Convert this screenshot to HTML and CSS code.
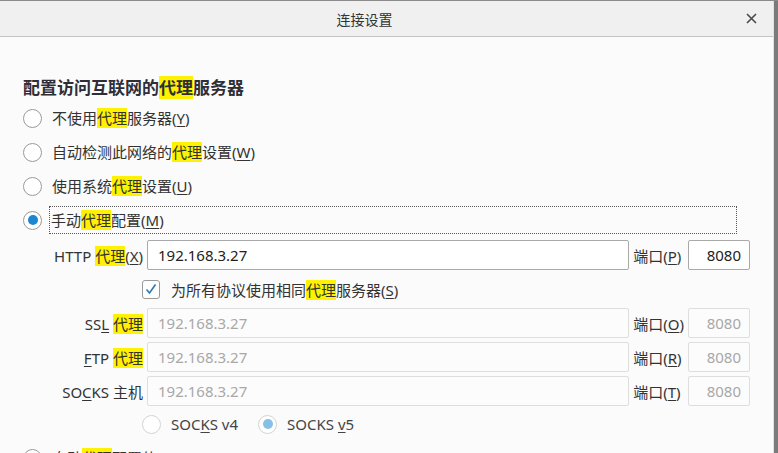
FILE: index.html
```html
<!DOCTYPE html>
<html>
<head>
    <title>连接设置</title>
    <link rel="stylesheet" href="styles.css">
</head>
<body>
    <div class="window">
        <div class="dialog">
            <div class="titlebar">
                <span class="title">连接设置</span>
                <span class="close">
                    <svg width="11" height="11" viewBox="0 0 11 11"><path d="M1 1L10 10M10 1L1 10" stroke="#4a4a4a" stroke-width="1.6" fill="none"/></svg>
                </span>
            </div>

            <div class="content">
                <h2 class="heading">配置访问互联网的<mark>代理</mark>服务器</h2>

                <label class="radio"><span class="dot"></span><span class="text">不使用<mark>代理</mark>服务器(<u>Y</u>)</span></label>
                <label class="radio"><span class="dot"></span><span class="text">自动检测此网络的<mark>代理</mark>设置(<u>W</u>)</span></label>
                <label class="radio"><span class="dot"></span><span class="text">使用系统<mark>代理</mark>设置(<u>U</u>)</span></label>
                <label class="radio checked"><span class="dot"></span><span class="text focus">手动<mark>代理</mark>配置(<u>M</u>)</span></label>

                <div class="proxy-grid">
                    <span class="plabel">HTTP <mark>代理</mark>(<u>X</u>)</span>
                    <div class="field">192.168.3.27</div>
                    <span class="portlabel">端口(<u>P</u>)</span>
                    <div class="field port">8080</div>

                    <label class="check-row">
                        <span class="box">
                            <svg width="14" height="14" viewBox="0 0 14 14"><path d="M2.5 7.5L5.5 11L11.5 2.5" stroke="#2a78b6" stroke-width="1.6" fill="none"/></svg>
                        </span>
                        <span>为所有协议使用相同<mark>代理</mark>服务器(<u>S</u>)</span>
                    </label>

                    <span class="plabel">SS<u>L</u> <mark>代理</mark></span>
                    <div class="field off">192.168.3.27</div>
                    <span class="portlabel">端口(<u>O</u>)</span>
                    <div class="field port off">8080</div>

                    <span class="plabel"><u>F</u>TP <mark>代理</mark></span>
                    <div class="field off">192.168.3.27</div>
                    <span class="portlabel">端口(<u>R</u>)</span>
                    <div class="field port off">8080</div>

                    <span class="plabel">SO<u>C</u>KS 主机</span>
                    <div class="field off">192.168.3.27</div>
                    <span class="portlabel">端口(<u>T</u>)</span>
                    <div class="field port off">8080</div>

                    <div class="socks-row">
                        <label class="radio small off"><span class="dot"></span><span class="text">SOC<u>K</u>S v4</span></label>
                        <label class="radio small off checked"><span class="dot"></span><span class="text">SOCKS <u>v</u>5</span></label>
                    </div>
                </div>

                <label class="radio last"><span class="dot"></span><span class="text">自动<mark>代理</mark>配置的 URL(<u>A</u>)</span></label>
            </div>
        </div>
        <div class="edge"></div>
    </div>
</body>
</html>
```

FILE: styles.css
```css
html, body {
    margin: 0;
    padding: 0;
    height: 100%;
    overflow: hidden;
}
body {
    font-family: "Noto Sans", "Noto Sans CJK SC", sans-serif;
    font-size: 15px;
    color: #333;
    background: #fbfbfb;
}
mark {
    background: #fff200;
    color: inherit;
}
u {
    text-decoration-thickness: 1px;
    text-underline-offset: 2px;
}
.window {
    display: flex;
    height: 453px;
    border-top: 1px solid #8a8a8a;
    box-sizing: border-box;
}
.dialog {
    flex: 1;
    display: flex;
    flex-direction: column;
    border-right: 1px solid #e2e2e2;
    overflow: hidden;
}
.edge {
    width: 4px;
    background: #7b7b7b;
}
.titlebar {
    flex: none;
    height: 35px;
    background: #f0f0f0;
    border-bottom: 1px solid #c4c4c4;
    display: flex;
    align-items: center;
    position: relative;
}
.title {
    flex: 1;
    text-align: center;
    padding-right: 44px;
    font-size: 14px;
    color: #333;
}
.close {
    position: absolute;
    right: 16px;
    top: 12px;
    line-height: 0;
}
.content {
    flex: none;
    padding: 39px 23px 0 23px;
    background: #fbfbfb;
}
.heading {
    margin: 0 0 1px 0;
    font-size: 17px;
    font-weight: bold;
    line-height: 24px;
    color: #2e2e38;
}
.radio {
    display: flex;
    align-items: center;
    height: 34px;
    color: #333;
}
.radio .dot {
    width: 19px;
    height: 19px;
    border: 1px solid #9a9a9a;
    border-radius: 50%;
    background: #fff;
    box-sizing: border-box;
    margin-right: 9px;
    display: flex;
    align-items: center;
    justify-content: center;
    flex: none;
}
.radio.checked .dot::after {
    content: "";
    width: 10px;
    height: 10px;
    border-radius: 50%;
    background: #1b86d2;
}
.radio .text {
    padding: 5px 2px 5px 1px;
    line-height: 18px;
    white-space: nowrap;
}
.radio .focus {
    flex: 1;
    margin-right: 13px;
    outline: 1px dotted #555;
    outline-offset: -1px;
    margin-left: -2px;
    padding-left: 2px;
}
.radio.off .dot {
    border-color: #d4d4d4;
}
.radio.off.checked .dot::after {
    background: #86c0e6;
}
.radio.last {
    margin-top: 3px;
}
.proxy-grid {
    display: grid;
    grid-template-columns: 93px 1fr auto 62px;
    column-gap: 4px;
    row-gap: 4px;
    margin: 3px 0 0 27px;
    align-items: center;
}
.plabel {
    text-align: right;
    white-space: nowrap;
    color: #333;
}
.portlabel {
    white-space: nowrap;
    color: #333;
}
.field {
    height: 30px;
    border: 1px solid #a9a9a9;
    border-radius: 2px;
    background: #fff;
    box-sizing: border-box;
    padding: 0 10px;
    line-height: 28px;
    font-size: 15px;
    color: #222;
}
.field.port {
    text-align: right;
    padding: 0 8px 0 0;
}
.field.off {
    border-color: #dedede;
    background: #fcfcfc;
    color: #a8a8a8;
}
.check-row {
    grid-column: 2 / 5;
    display: flex;
    align-items: center;
    height: 30px;
    margin: 0 0 0 -5px;
}
.check-row .box {
    width: 18px;
    height: 19px;
    border: 1px solid #9a9a9a;
    border-radius: 3px;
    background: #fff;
    box-sizing: border-box;
    display: flex;
    align-items: center;
    justify-content: center;
    margin-right: 11px;
}
.socks-row {
    grid-column: 2 / 5;
    display: flex;
    gap: 18px;
    margin-left: -5px;
}
.radio.small {
    height: 28px;
}
.radio.small .text {
    color: #444;
}
```
